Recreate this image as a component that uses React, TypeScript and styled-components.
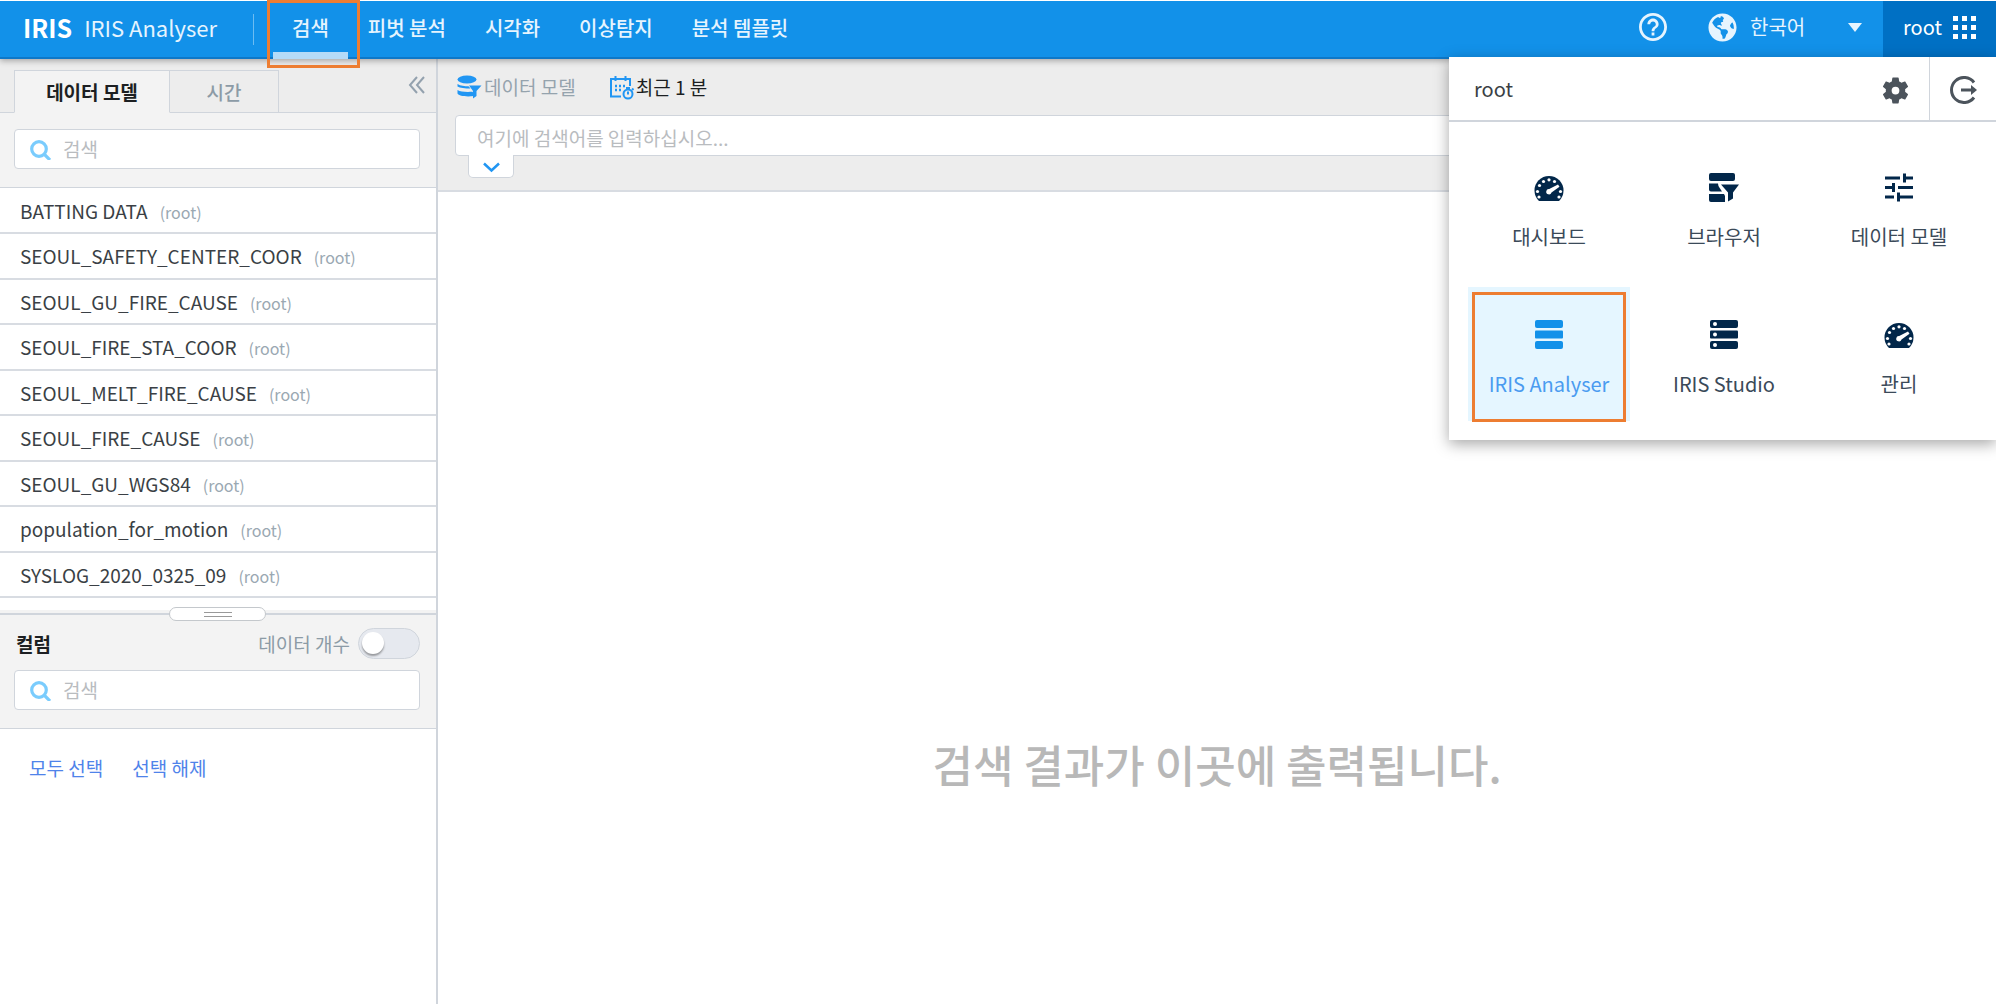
import React from "react";
import styled, { createGlobalStyle } from "styled-components";
import { FaGlobeAmericas } from "react-icons/fa";

const Global = createGlobalStyle`
  *, *::before, *::after { box-sizing: border-box; }
  html, body, #root { height: 100%; }
  body {
    margin: 0;
    background: #fff;
    color: #3a3f45;
    font-family: "Noto Sans CJK KR", "Noto Sans", sans-serif;
    font-size: 19px;
    line-height: 24px;
  }
  button, input, select { font: inherit; color: inherit; margin: 0; }
  button { padding: 0; border: 0; background: none; cursor: pointer; }
  ul { list-style: none; margin: 0; padding: 0; }
  a { text-decoration: none; color: inherit; }
  svg { display: block; flex: none; }
`;

const line = "#d0d5dc";
const blue = "#1291e9";
const orange = "#ed7d31";

const Page = styled.div`
  min-height: 100%;
  display: flex;
  flex-direction: column;
  position: relative;
`;

const Header = styled.header`
  position: relative;
  z-index: 2;
  display: flex;
  align-items: stretch;
  height: 59px;
  border-top: 1px solid #fff;
  border-bottom: 2px solid #0e78c8;
  background: ${blue};
  color: #e6f4fe;
  box-shadow: 0 2px 6px rgba(0, 0, 0, 0.3);
`;

const Brand = styled.h1`
  display: flex;
  align-items: center;
  gap: 12px;
  margin: 0;
  padding: 0 0 4px 23px;
  font-size: 22px;
  font-weight: 400;
`;

const BrandMark = styled.strong`
  font-size: 25px;
  font-weight: 700;
  color: #fff;
`;

const Divider = styled.span`
  align-self: center;
  width: 1px;
  height: 31px;
  margin: 0 19px 0 36px;
  background: #6cbcf2;
`;

const Nav = styled.nav`
  display: flex;
  align-items: stretch;
  gap: 1px;
`;

const NavLink = styled.a<{ $active?: boolean }>`
  position: relative;
  display: flex;
  align-items: center;
  padding: 0 19px 3px;
  font-size: 20px;
  font-weight: 500;
  ${(p) =>
    p.$active &&
    `
    &::before {
      content: "";
      position: absolute;
      left: 0;
      right: 0;
      bottom: -2px;
      height: 7px;
      background: #b4dbf8;
    }
    &::after {
      content: "";
      position: absolute;
      inset: -1px -12px -11px -6px;
      border: 3px solid ${orange};
    }
  `}
`;

const HeaderTools = styled.div`
  display: flex;
  align-items: stretch;
  margin-left: auto;
`;

const IconButton = styled.button`
  display: grid;
  place-items: center;
  padding-bottom: 5px;
`;

const LanguageField = styled.label`
  display: flex;
  align-items: center;
  gap: 13px;
  margin: 0 21px 0 41px;
  padding-bottom: 4px;
`;

const LanguageSelect = styled.select`
  appearance: none;
  width: 114px;
  height: 32px;
  padding: 0;
  border: 0;
  background: transparent;
  font-size: 20px;
`;

const Caret = styled.svg`
  margin-left: -29px;
  pointer-events: none;
`;

const UserButton = styled.button`
  display: flex;
  align-items: center;
  gap: 11px;
  margin-bottom: -2px;
  padding: 0 20px 6px;
  background: #0070c4;
  color: #fff;
  font-size: 20px;
`;

const Body = styled.div`
  flex: 1;
  display: flex;
`;

const Sidebar = styled.aside`
  flex: none;
  width: 438px;
  border-right: 2px solid ${line};
`;

const TabBar = styled.div`
  display: flex;
  padding: 11px 0 0 14px;
  background: #ededed;
  box-shadow: inset 0 -1px ${line};
`;

const Tab = styled.button<{ $active?: boolean }>`
  height: 43px;
  width: ${(p) => (p.$active ? 156 : 109)}px;
  border: 1px solid ${line};
  border-left-width: ${(p) => (p.$active ? 1 : 0)}px;
  border-bottom-color: ${(p) => (p.$active ? "#f3f3f3" : line)};
  background: ${(p) => (p.$active ? "#f3f3f3" : "#ededed")};
  color: ${(p) => (p.$active ? "#1c1f22" : "#8c9ba6")};
  font-weight: ${(p) => (p.$active ? 700 : 500)};
`;

const CollapseButton = styled.button`
  align-self: flex-start;
  margin: 6px 11px 0 auto;
`;

const SearchPanel = styled.div`
  padding: 16px 16px 18px 14px;
  border-bottom: 1px solid ${line};
  background: #f3f3f3;
`;

const SearchField = styled.label`
  display: flex;
  align-items: center;
  gap: 12px;
  height: 40px;
  padding: 0 15px;
  border: 1px solid ${line};
  border-radius: 4px;
  background: #fff;
`;

const TextInput = styled.input`
  flex: 1;
  min-width: 0;
  padding: 0;
  border: 0;
  outline: 0;
  background: transparent;
  &::placeholder { color: #b9bcbf; opacity: 1; }
`;

const ModelList = styled.ul`
  display: flex;
  flex-direction: column;
  height: 425px;
  padding: 1px 0 15px;
`;

const ModelRow = styled.li`
  flex: 1;
  display: flex;
  border-bottom: 2px solid #d8dce2;
`;

const ModelButton = styled.button`
  display: flex;
  align-items: baseline;
  gap: 12px;
  width: 100%;
  padding: 10px 20px 0;
  text-align: left;
`;

const Owner = styled.span`
  color: #9aa8b2;
  font-size: 16px;
`;

const ColumnPanel = styled.section`
  position: relative;
  border-top: 2px solid ${line};
  border-bottom: 1px solid ${line};
  padding: 13px 16px 18px 14px;
  background: #f3f3f3;
  box-shadow: 0 -3px 0 #f3f3f3;
`;

const DragHandle = styled.button`
  position: absolute;
  top: -8px;
  left: 169px;
  display: grid;
  place-items: center;
  width: 97px;
  height: 14px;
  border: 1px solid #c4c8cc;
  border-radius: 7px;
  background: #fff;
  &::before {
    content: "";
    width: 28px;
    height: 5px;
    border: solid #999;
    border-width: 1px 0;
  }
`;

const ColumnHead = styled.div`
  display: flex;
  align-items: center;
  justify-content: space-between;
  margin-bottom: 11px;
`;

const ColumnTitle = styled.h2`
  margin: 0 0 0 2px;
  color: #1c1f22;
  font-size: 19px;
  font-weight: 700;
`;

const SwitchLabel = styled.label`
  display: flex;
  align-items: center;
  gap: 8px;
  color: #8c9ba6;
`;

const Switch = styled.input`
  appearance: none;
  width: 62px;
  height: 31px;
  margin: 0;
  padding: 3px;
  border: 1px solid ${line};
  border-radius: 16px;
  background: #e6e9ef;
  &::before {
    content: "";
    display: block;
    width: 22px;
    height: 22px;
    border-radius: 50%;
    background: #fff;
    box-shadow: 0 2px 2px rgba(0, 0, 0, 0.35);
  }
`;

const SelectActions = styled.div`
  display: flex;
  gap: 29px;
  padding: 27px 29px;
`;

const TextButton = styled.button`
  color: #4f83ea;
`;

const Main = styled.main`
  flex: 1;
  min-width: 0;
  display: flex;
  flex-direction: column;
`;

const QueryBar = styled.section`
  height: 133px;
  padding: 12px 17px 0;
  border-bottom: 2px solid #d8dce2;
  background: #ededed;
`;

const Filters = styled.div`
  display: flex;
  gap: 33px;
  margin-bottom: 12px;
  padding-left: 2px;
`;

const FilterButton = styled.button<{ $muted?: boolean }>`
  display: flex;
  align-items: center;
  gap: 2px;
  height: 32px;
  color: ${(p) => (p.$muted ? "#95a3ad" : "#1c1f22")};
`;

const QueryField = styled.div`
  display: flex;
  height: 41px;
  padding: 5px 21px 0;
  border: 1px solid ${line};
  border-radius: 4px;
  background: #fff;
`;

const ExpandButton = styled.button`
  display: grid;
  place-items: center;
  width: 46px;
  height: 23px;
  margin: -1px 0 0 13px;
  padding-top: 3px;
  border: 1px solid ${line};
  border-top: 0;
  border-radius: 0 0 5px 5px;
  background: #fff;
`;

const Result = styled.section`
  flex: 1;
  display: grid;
  grid-template-rows: 13fr auto 5fr;
  justify-items: center;
`;

const ResultText = styled.p`
  grid-row: 2;
  margin: 0;
  color: #b8b8b8;
  font-size: 44px;
  line-height: 64px;
  font-weight: 500;
`;

const Menu = styled.section`
  position: absolute;
  z-index: 3;
  top: 57px;
  right: 0;
  width: 547px;
  background: #fff;
  box-shadow: 0 4px 14px rgba(0, 0, 0, 0.35);
`;

const MenuHead = styled.div`
  display: flex;
  align-items: center;
  height: 65px;
  border-bottom: 2px solid ${line};
  padding-left: 25px;
  font-size: 20px;
`;

const MenuIcon = styled.button<{ $split?: boolean }>`
  display: grid;
  place-items: center;
  align-self: stretch;
  width: 67px;
  padding-top: 3px;
  border-left: ${(p) => (p.$split ? `1px solid ${line}` : "0")};
  color: #4c545c;
`;

const MenuName = styled.span`
  flex: 1;
`;

const AppGrid = styled.ul`
  display: grid;
  grid-template-columns: repeat(3, 1fr);
  gap: 13px;
  padding: 18px 16px 19px 19px;
`;

const AppLink = styled.a<{ $active?: boolean }>`
  position: relative;
  display: flex;
  flex-direction: column;
  align-items: center;
  gap: 23px;
  height: 134px;
  padding-top: 32px;
  font-size: 20px;
  background: ${(p) => (p.$active ? "#e5f6ff" : "transparent")};
  color: ${(p) => (p.$active ? "#4a9bf0" : "#3b4a59")};
  svg { color: ${(p) => (p.$active ? blue : "#02274a")}; }
  ${(p) =>
    p.$active &&
    `
    &::after {
      content: "";
      position: absolute;
      inset: 5px 4px -1px;
      border: 3px solid ${orange};
    }
  `}
`;

const HelpIcon = () => (
  <svg width="28" height="28" viewBox="2 2 20 20" fill="currentColor" aria-hidden="true">
    <path d="M11 18h2v-2h-2v2zm1-16C6.500 2 2 6.500 2 12s4.500 10 10 10 10-4.500 10-10S17.500 2 12 2zm0 18c-4.400 0-8-3.600-8-8s3.600-8 8-8 8 3.600 8 8-3.600 8-8 8zm0-14c-2.200 0-4 1.800-4 4h2c0-1.100.9-2 2-2s2 .9 2 2c0 2-3 1.750-3 5h2c0-2.250 3-2.500 3-5 0-2.200-1.800-4-4-4z" />
  </svg>
);

const GridIcon = () => (
  <svg width="23" height="23" viewBox="0 0 23 23" fill="currentColor" aria-hidden="true">
    {[0, 9, 18].map((y) => [0, 9, 18].map((x) => <rect key={`${x}-${y}`} x={x} y={y} width="5" height="5" />))}
  </svg>
);

const SearchIcon = () => (
  <svg width="21" height="21" viewBox="0 0 21 21" fill="none" stroke="#7accfd" strokeWidth="3.200" aria-hidden="true">
    <circle cx="9" cy="10" r="7.300" />
    <path d="M14 15l6 6" />
  </svg>
);

const CollapseIcon = () => (
  <svg width="17" height="18" viewBox="0 0 17 18" fill="none" stroke="#93a1ae" strokeWidth="2" aria-hidden="true">
    <path d="M9 1 2 9l7 8M16 1 9 9l7 8" />
  </svg>
);

const ModelIcon = () => (
  <svg width="25" height="24" viewBox="0 0 25 24" fill="#2196f3" aria-hidden="true">
    <ellipse cx="10" cy="4.500" rx="9.500" ry="4" />
    <path d="M.5 9c3 2 7 2.200 11 2.200l2 2.300C8 13.500 3 13 .5 11.500ZM.5 15c3 1.800 8 2.200 15 1.800l1.500 2v2.200C9 22 2 21 .5 18.500Z" />
    <path d="M12 10.500h12.500L19.500 16v5L16 23.500v-7.500Z" />
  </svg>
);

const CalendarIcon = () => (
  <svg width="25" height="25" viewBox="0 0 25 25" fill="none" stroke="#2196f3" strokeWidth="2" aria-hidden="true">
    <path d="M12 21.500H2V4h19v7M6.500 1v5M16.500 1v5" />
    <path d="M6 11h2M10 11h2M14 11h2M6 15h2M10 15h2" strokeWidth="2.500" />
    <circle cx="19" cy="19" r="4.500" />
    <path d="M19 19.500v-3M17 13h4M23 13.500l1.500 1.500" />
  </svg>
);

const ChevronIcon = () => (
  <svg width="17" height="11" viewBox="0 0 17 11" fill="none" stroke="#2196f3" strokeWidth="2.500" aria-hidden="true">
    <path d="M1 1.500l7.500 7 7.500-7" />
  </svg>
);

const GearIcon = () => (
  <svg width="31" height="31" viewBox="0 0 24 24" fill="currentColor" aria-hidden="true">
    <path d="M19.430 12.980c.04-.32.07-.64.07-.98s-.03-.66-.07-.98l2.110-1.650c.19-.15.24-.42.12-.64l-2-3.460c-.12-.22-.39-.3-.61-.22l-2.490 1c-.52-.4-1.080-.73-1.690-.98l-.38-2.650C14.460 2.180 14.250 2 14 2h-4c-.25 0-.46.18-.49.42l-.38 2.650c-.61.25-1.170.59-1.690.98l-2.490-1c-.23-.09-.49 0-.61.22l-2 3.460c-.13.22-.07.49.12.64l2.110 1.650c-.04.32-.07.65-.07.98s.03.66.07.98l-2.110 1.650c-.19.15-.24.42-.12.64l2 3.460c.12.22.39.3.61.22l2.490-1c.52.4 1.080.73 1.690.98l.38 2.650c.03.24.24.42.49.42h4c.25 0 .46-.18.49-.42l.38-2.650c.61-.25 1.170-.59 1.690-.98l2.490 1c.23.09.49 0 .61-.22l2-3.460c.12-.22.07-.49-.12-.64l-2.110-1.650zM12 15a3 3 0 1 1 0-6 3 3 0 0 1 0 6z" />
  </svg>
);

const LogoutIcon = () => (
  <svg width="28" height="28" viewBox="0 0 28 28" fill="none" stroke="currentColor" strokeWidth="3" aria-hidden="true">
    <path d="M25 6.500a12.500 12.500 0 1 0 0 15M12 14h12" />
    <path d="M22 9 28 14 22 19Z" fill="currentColor" stroke="none" />
  </svg>
);

const GaugeIcon = () => (
  <svg width="30" height="30" viewBox="0 0 30 30" aria-hidden="true">
    <path d="M5 29A14.500 14.500 0 1 1 25 29Z" fill="currentColor" />
    <g fill="#fff">
      <circle cx="5" cy="25" r="1.600" /><circle cx="3.500" cy="19.500" r="1.600" /><circle cx="5.500" cy="13.500" r="1.600" />
      <circle cx="9.500" cy="9.500" r="1.600" /><circle cx="15" cy="7.800" r="1.600" /><circle cx="20.500" cy="9.500" r="1.600" />
      <circle cx="26.500" cy="19.500" r="1.600" /><circle cx="25" cy="25" r="1.600" />
      <path d="M24 12.500l1.500 2.200-8 5.800a2.700 2.700 0 1 1-2.300-3.500Z" />
    </g>
  </svg>
);

const BrowserIcon = () => (
  <svg width="30" height="30" viewBox="0 0 30 30" fill="currentColor" aria-hidden="true">
    <rect y="1" width="26" height="8" rx="2" />
    <path d="M0 11.500h9q0 3 2 5l2 3H2q-2 0-2-2ZM0 22h15l1 2v6H2q-2 0-2-2Z" />
    <path d="M12 12.500h18l-6 8v6l-5 3v-9Z" />
  </svg>
);

const TuneIcon = () => (
  <svg width="30" height="30" viewBox="0 0 30 30" fill="none" stroke="currentColor" strokeWidth="3" aria-hidden="true">
    <path d="M1 6h15M20.500 6H29M20.500 1.500v9M1 15.500h9M14 15.500h15M9.500 11v9M1 25h9M14.500 25H29M14.500 20.500v9" />
  </svg>
);

const StackIcon = ({ dots = false }: { dots?: boolean }) => (
  <svg width="28" height="30" viewBox="0 0 28 30" fill="currentColor" aria-hidden="true">
    <rect y="1" width="28" height="8" rx="2" />
    <rect y="11.500" width="28" height="8" rx="1" />
    <rect y="22" width="28" height="8" rx="2" />
    {dots && [5, 15.5, 26].map((y) => <circle key={y} cx="5" cy={y} r="2" fill="#fff" />)}
  </svg>
);

const navItems = ["검색", "피벗 분석", "시각화", "이상탐지", "분석 템플릿"];

const models = [
  "BATTING DATA",
  "SEOUL_SAFETY_CENTER_COOR",
  "SEOUL_GU_FIRE_CAUSE",
  "SEOUL_FIRE_STA_COOR",
  "SEOUL_MELT_FIRE_CAUSE",
  "SEOUL_FIRE_CAUSE",
  "SEOUL_GU_WGS84",
  "population_for_motion",
  "SYSLOG_2020_0325_09",
];

const apps = [
  { name: "대시보드", icon: <GaugeIcon /> },
  { name: "브라우저", icon: <BrowserIcon /> },
  { name: "데이터 모델", icon: <TuneIcon /> },
  { name: "IRIS Analyser", icon: <StackIcon />, active: true },
  { name: "IRIS Studio", icon: <StackIcon dots /> },
  { name: "관리", icon: <GaugeIcon /> },
];

export default function App() {
  return (
    <Page>
      <Global />
      <Header>
        <Brand>
          <BrandMark>IRIS</BrandMark>IRIS Analyser
        </Brand>
        <Divider />
        <Nav>
          {navItems.map((item, i) => (
            <NavLink key={item} href="#" $active={i === 0}>{item}</NavLink>
          ))}
        </Nav>
        <HeaderTools>
          <IconButton aria-label="도움말"><HelpIcon /></IconButton>
          <LanguageField>
            <FaGlobeAmericas size={29} aria-hidden="true" />
            <LanguageSelect aria-label="언어"><option>한국어</option></LanguageSelect>
            <Caret width="14" height="9" viewBox="0 0 14 9"><path d="M0 0h14L7 9Z" fill="#e6f4fe" /></Caret>
          </LanguageField>
          <UserButton>root<GridIcon /></UserButton>
        </HeaderTools>
      </Header>

      <Body>
        <Sidebar>
          <TabBar>
            <Tab $active>데이터 모델</Tab>
            <Tab>시간</Tab>
            <CollapseButton aria-label="접기"><CollapseIcon /></CollapseButton>
          </TabBar>
          <SearchPanel>
            <SearchField>
              <SearchIcon />
              <TextInput placeholder="검색" aria-label="데이터 모델 검색" />
            </SearchField>
          </SearchPanel>
          <ModelList>
            {models.map((model) => (
              <ModelRow key={model}>
                <ModelButton>{model}<Owner>(root)</Owner></ModelButton>
              </ModelRow>
            ))}
          </ModelList>
          <ColumnPanel>
            <DragHandle aria-label="크기 조절" />
            <ColumnHead>
              <ColumnTitle>컬럼</ColumnTitle>
              <SwitchLabel>데이터 개수<Switch type="checkbox" role="switch" /></SwitchLabel>
            </ColumnHead>
            <SearchField>
              <SearchIcon />
              <TextInput placeholder="검색" aria-label="컬럼 검색" />
            </SearchField>
          </ColumnPanel>
          <SelectActions>
            <TextButton>모두 선택</TextButton>
            <TextButton>선택 해제</TextButton>
          </SelectActions>
        </Sidebar>

        <Main>
          <QueryBar>
            <Filters>
              <FilterButton $muted><ModelIcon />데이터 모델</FilterButton>
              <FilterButton><CalendarIcon />최근 1 분</FilterButton>
            </Filters>
            <QueryField>
              <TextInput placeholder="여기에 검색어를 입력하십시오..." aria-label="검색어" />
            </QueryField>
            <ExpandButton aria-label="펼치기"><ChevronIcon /></ExpandButton>
          </QueryBar>
          <Result>
            <ResultText>검색 결과가 이곳에 출력됩니다.</ResultText>
          </Result>
        </Main>
      </Body>

      <Menu>
        <MenuHead>
          <MenuName>root</MenuName>
          <MenuIcon aria-label="설정"><GearIcon /></MenuIcon>
          <MenuIcon $split aria-label="로그아웃"><LogoutIcon /></MenuIcon>
        </MenuHead>
        <AppGrid>
          {apps.map((app) => (
            <li key={app.name}>
              <AppLink href="#" $active={app.active}>{app.icon}{app.name}</AppLink>
            </li>
          ))}
        </AppGrid>
      </Menu>
    </Page>
  );
}
